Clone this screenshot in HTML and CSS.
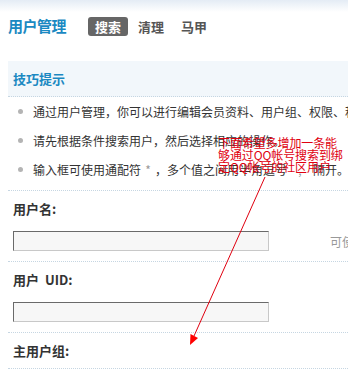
FILE: index.html
```html
<!DOCTYPE html>
<html>
<head>
<meta charset="utf-8">
<link rel="stylesheet" href="styles.css">
</head>
<body>
<div class="page">
  <div class="header">
    <h1 class="title">用户管理</h1>
    <nav class="tabs">
      <span class="tab active">搜索</span>
      <span class="tab">清理</span>
      <span class="tab">马甲</span>
    </nav>
  </div>

  <div class="tips">
    <div class="tips-head">技巧提示</div>
    <ul class="tips-list">
      <li>通过用户管理，你可以进行编辑会员资料、用户组、权限、积分等操作。</li>
      <li>请先根据条件搜索用户，然后选择相应的操作。</li>
      <li>输入框可使用通配符<em class="sym sym1">*</em>，多个值之间用半角逗号<em class="sym sym2">,</em>隔开。</li>
    </ul>
  </div>

  <div class="form">
    <div class="row">
      <div class="label">用户名:</div>
      <div class="field"><span class="input"></span><span class="hint">可使用通配符</span></div>
    </div>
    <div class="row">
      <div class="label">用户&nbsp;&nbsp;UID:</div>
      <div class="field"><span class="input"></span></div>
    </div>
    <div class="row">
      <div class="label">主用户组:</div>
    </div>
  </div>

  <div class="note">下面希望多增加一条能<br>够通过QQ帐号搜索到绑<br>定QQ帐号的社区用户</div>
  <svg class="arrow" width="348" height="369" viewBox="0 0 348 369">
    <line x1="265" y1="177" x2="194" y2="336" stroke="#e0000f" stroke-width="1"/>
    <polygon points="190,345 198,338 190.5,334" fill="#ff0000"/>
  </svg>
</div>
</body>
</html>
```

FILE: styles.css
```css
html, body {
  margin: 0;
  padding: 0;
  background: #fff;
}
body {
  width: 348px;
  height: 369px;
  overflow: hidden;
  font-family: "Noto Sans CJK SC", "DejaVu Sans", sans-serif;
  font-size: 12px;
  color: #333;
}
.page {
  position: relative;
  width: 348px;
  height: 369px;
  overflow: hidden;
}
.header {
  height: 52px;
  padding: 0 8px;
  display: flex;
  align-items: center;
  background: linear-gradient(#e4ecf5 0px, #ffffff 12px);
}
.title {
  margin: 0;
  font-size: 15px;
  font-weight: bold;
  color: #1b89c2;
  width: 80px;
  line-height: 18px;
  letter-spacing: -0.5px;
}
.tabs {
  display: flex;
  gap: 3px;
  margin-top: 1px;
}
.tab {
  padding: 0 7px;
  height: 19px;
  line-height: 19px;
  font-size: 13px;
  font-weight: bold;
  color: #555;
  border-radius: 3px;
}
.tab.active {
  background: #666;
  color: #fff;
}
.tips {
  margin: 9px 0 0 8px;
}
.tips-head {
  height: 35px;
  line-height: 35px;
  padding-left: 5px;
  background: #f2f7fb;
  border-bottom: 1px dotted #c6d6e2;
  font-size: 13px;
  font-weight: bold;
  color: #1b89c2;
}
.tips-list {
  list-style: none;
  margin: 0;
  padding: 0 0 6px 0;
  white-space: nowrap;
}
.tips-list li {
  height: 29px;
  line-height: 29px;
  padding-left: 25px;
  position: relative;
}
.tips-list li::before {
  content: "";
  position: absolute;
  left: 10px;
  top: 12px;
  width: 5px;
  height: 5px;
  border-radius: 50%;
  background: #b4b4b4;
}
.sym {
  font-style: normal;
  color: #999;
  display: inline-block;
  text-align: center;
}
.sym1 { width: 14px; }
.sym2 { width: 26px; }
.form {
  margin-left: 8px;
  border-top: 1px dotted #c6d6e2;
}
.row {
  padding: 11px 0 10px 5px;
  border-bottom: 1px dotted #c6d6e2;
}
.label {
  height: 14px;
  line-height: 14px;
  font-size: 13px;
  font-weight: bold;
  color: #333;
}
.field {
  margin-top: 15px;
  display: flex;
  align-items: center;
  white-space: nowrap;
}
.input {
  display: block;
  width: 254px;
  height: 18px;
  background: #f7f7f7;
  border-top: 1px solid #6a6a6a;
  border-left: 1px solid #6a6a6a;
  border-right: 1px solid #c8c8c8;
  border-bottom: 1px solid #c8c8c8;
  flex: none;
}
.hint {
  margin-left: 61px;
  color: #999;
}
.note {
  position: absolute;
  left: 218px;
  top: 137px;
  font-size: 12px;
  line-height: 12px;
  color: #e00010;
  white-space: nowrap;
  letter-spacing: -0.1px;
}
.arrow {
  position: absolute;
  left: 0;
  top: 0;
  pointer-events: none;
}
```
